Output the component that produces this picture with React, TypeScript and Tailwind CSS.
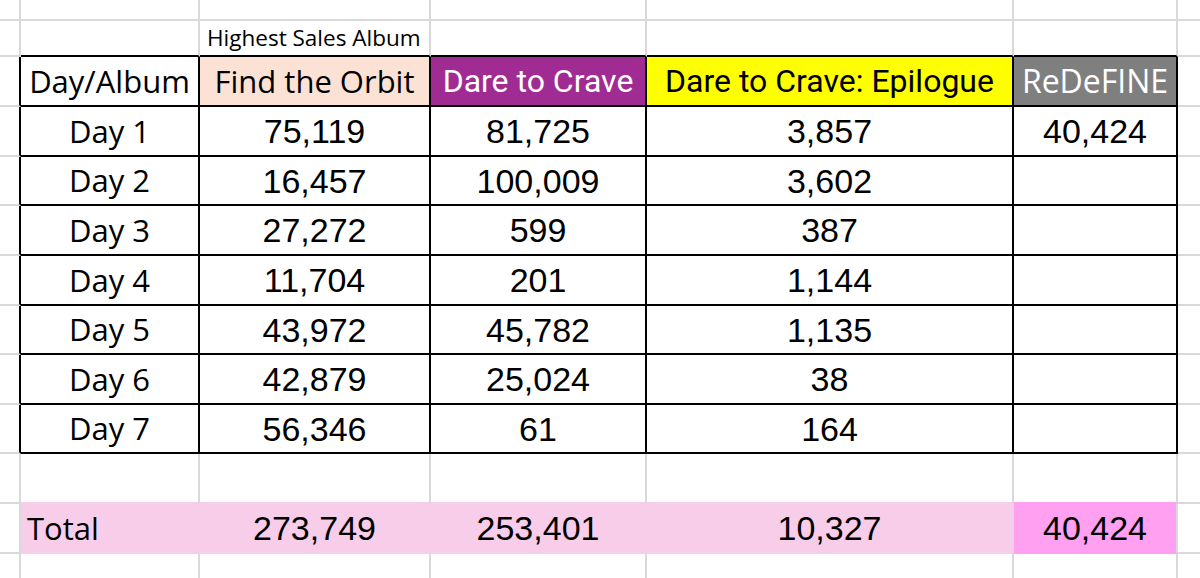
import React from "react";

const colW = ["w-[21px]", "w-[179px]", "w-[231px]", "w-[216px]", "w-[367px]", "w-[164px]", "w-[22px]"];
const rowH = ["h-[21px]", "h-[36px]", "h-[50px]", "h-[50px]", "h-[49px]", "h-[50px]", "h-[50px]", "h-[49px]", "h-[50px]", "h-[49px]", "h-[50px]", "h-[50px]", "h-[24px]"];

const days: [string, string, string, string, string][] = [
  ["Day 1", "75,119", "81,725", "3,857", "40,424"],
  ["Day 2", "16,457", "100,009", "3,602", ""],
  ["Day 3", "27,272", "599", "387", ""],
  ["Day 4", "11,704", "201", "1,144", ""],
  ["Day 5", "43,972", "45,782", "1,135", ""],
  ["Day 6", "42,879", "25,024", "38", ""],
  ["Day 7", "56,346", "61", "164", ""],
];

const aptos = "font-['Open_Sans',sans-serif]";
const roboto = "font-['Roboto',sans-serif]";
const arial = "font-['Liberation_Sans',Arial,sans-serif]";

function Cell({
  r,
  c,
  className = "",
  children,
}: {
  r: number;
  c: number;
  className?: string;
  children?: React.ReactNode;
}) {
  return (
    <div className={`${colW[c]} ${rowH[r]} box-border shrink-0 flex items-center ${className}`}>
      {children}
    </div>
  );
}

function Row({ children }: { children: React.ReactNode }) {
  return <div className="flex">{children}</div>;
}

export default function App() {
  const grid = "border-r-2 border-b-2 border-r-[#d9d9d9] border-b-[#d9d9d9]";
  const black = "border-r-2 border-b-2 border-black";
  const lastCol = "border-b-2 border-b-[#d9d9d9]";

  return (
    <div className="w-[1200px] h-[578px] bg-white overflow-hidden text-black">
      {/* row 0 */}
      <Row>
        {[0, 1, 2, 3, 4, 5].map((c) => (
          <Cell key={c} r={0} c={c} className={grid} />
        ))}
        <Cell r={0} c={6} className={lastCol} />
      </Row>
      {/* row 1: Highest Sales Album */}
      <Row>
        <Cell r={1} c={0} className={grid} />
        <Cell r={1} c={1} className="border-r-2 border-r-[#d9d9d9] border-b-2 border-b-black" />
        <Cell r={1} c={2} className="border-r-2 border-r-[#d9d9d9] border-b-2 border-b-black items-end">
          <span className={`${aptos} text-[22.5px] leading-none pl-[7px] pb-[6px] whitespace-nowrap`}>Highest Sales Album</span>
        </Cell>
        {[3, 4, 5].map((c) => (
          <Cell key={c} r={1} c={c} className="border-r-2 border-r-[#d9d9d9] border-b-2 border-b-black" />
        ))}
        <Cell r={1} c={6} className={lastCol} />
      </Row>
      {/* row 2: header */}
      <Row>
        <Cell r={2} c={0} className="border-r-2 border-r-black border-b-2 border-b-[#d9d9d9]" />
        <Cell r={2} c={1} className={`${black} justify-center`}>
          <span className={`${aptos} text-[31px] leading-none`}>Day/Album</span>
        </Cell>
        <Cell r={2} c={2} className={`${black} justify-center bg-[#fbe2d5]`}>
          <span className={`${aptos} text-[31px] leading-none`}>Find the Orbit</span>
        </Cell>
        <Cell r={2} c={3} className={`${black} justify-center bg-[#a02b93] text-white`}>
          <span className={`${roboto} text-[32px] leading-none`}>Dare to Crave</span>
        </Cell>
        <Cell r={2} c={4} className={`${black} justify-center bg-[#ffff00]`}>
          <span className={`${roboto} text-[32px] leading-none`}>Dare to Crave: Epilogue</span>
        </Cell>
        <Cell r={2} c={5} className={`${black} justify-center bg-[#7f7f7f] text-white`}>
          <span className={`${aptos} text-[32px] leading-none`}>ReDeFINE</span>
        </Cell>
        <Cell r={2} c={6} className={lastCol} />
      </Row>
      {/* day rows */}
      {days.map((d, i) => (
        <Row key={d[0]}>
          <Cell r={3 + i} c={0} className="border-r-2 border-r-black border-b-2 border-b-[#d9d9d9]" />
          <Cell r={3 + i} c={1} className={`${black} justify-center`}>
            <span className={`${aptos} text-[31px] leading-none`}>{d[0]}</span>
          </Cell>
          {[1, 2, 3, 4].map((k) => (
            <Cell key={k} r={3 + i} c={k + 1} className={`${black} justify-center`}>
              <span className={`${arial} text-[34px] leading-none`}>{d[k]}</span>
            </Cell>
          ))}
          <Cell r={3 + i} c={6} className={lastCol} />
        </Row>
      ))}
      {/* blank row */}
      <Row>
        <Cell r={10} c={0} className={grid} />
        {[1, 2, 3, 4].map((c) => (
          <Cell key={c} r={10} c={c} className="border-r-2 border-r-[#d9d9d9] border-b-2 border-b-[#f8cde9]" />
        ))}
        <Cell r={10} c={5} className="border-r-2 border-r-[#d9d9d9] border-b-2 border-b-[#ffa0f0]" />
        <Cell r={10} c={6} className={lastCol} />
      </Row>
      {/* total row */}
      <Row>
        <Cell r={11} c={0} className={grid} />
        <Cell r={11} c={1} className="border-r-2 border-b-2 border-[#f8cde9] bg-[#f8cde9]">
          <span className={`${aptos} text-[31px] leading-none pl-[6px]`}>Total</span>
        </Cell>
        {["273,749", "253,401", "10,327"].map((v, k) => (
          <Cell key={v} r={11} c={k + 2} className="border-r-2 border-b-2 border-[#f8cde9] bg-[#f8cde9] justify-center">
            <span className={`${arial} text-[34px] leading-none`}>{v}</span>
          </Cell>
        ))}
        <Cell r={11} c={5} className="border-r-2 border-r-[#d9d9d9] border-b-2 border-b-[#ffa0f0] bg-[#ffa0f0] justify-center">
          <span className={`${arial} text-[34px] leading-none`}>40,424</span>
        </Cell>
        <Cell r={11} c={6} className={lastCol} />
      </Row>
      {/* bottom partial row */}
      <Row>
        {[0, 1, 2, 3, 4, 5].map((c) => (
          <Cell key={c} r={12} c={c} className="border-r-2 border-r-[#d9d9d9]" />
        ))}
        <Cell r={12} c={6} />
      </Row>
    </div>
  );
}
